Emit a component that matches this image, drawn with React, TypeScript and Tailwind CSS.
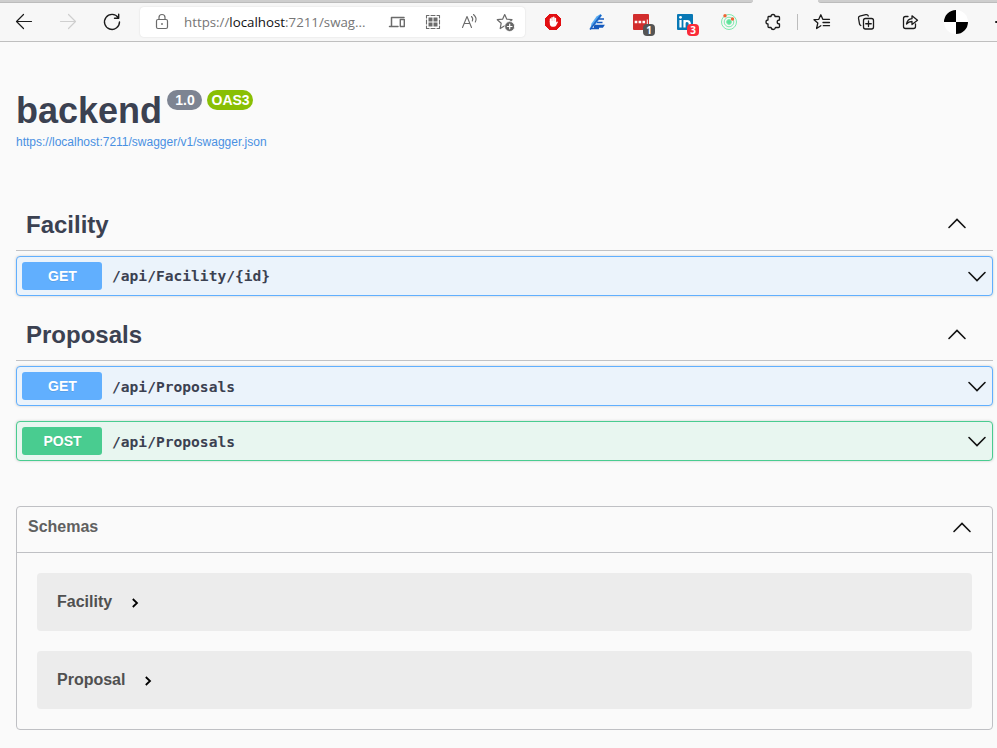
import React from 'react';

type IconProps = { children: React.ReactNode; size?: number; className?: string };

function Icon({ children, size = 20, className = '' }: IconProps) {
  return (
    <svg
      width={size}
      height={size}
      viewBox="0 0 20 20"
      fill="none"
      stroke="currentColor"
      strokeWidth="1.2"
      strokeLinecap="round"
      strokeLinejoin="round"
      className={className}
    >
      {children}
    </svg>
  );
}

function Cell({ children, className = 'w-11' }: { children: React.ReactNode; className?: string }) {
  return <div className={`flex h-full shrink-0 items-center justify-center ${className}`}>{children}</div>;
}

const starPath = 'M9.700 2.500 L11.800 7.200 L17 7.700 L13.200 11.200 L14.200 16.500 L9.700 13.700 L5.200 16.500 L6.200 11.200 L2.300 7.700 L7.600 7.200Z';

function AddressBar() {
  return (
    <div className="ml-1.5 flex h-[30px] w-[385px] shrink-0 items-center rounded bg-white text-[#6b6b6b] shadow-[0_0_2px_rgba(0,0,0,0.12)]">
      <Cell>
        <Icon>
          <rect x="4.500" y="7.500" width="11" height="9" rx="1.500" />
          <path d="M7 7.500V5.500a3 3 0 0 1 6 0V7.500" />
          <circle cx="10" cy="12" r="0.900" fill="currentColor" stroke="none" />
        </Icon>
      </Cell>
      <div className="w-[195px] whitespace-nowrap font-['Open_Sans','Noto_Sans',sans-serif] text-[13.3px] leading-5 text-[#767676]">
        https://<span className="text-[#111]">localhost</span>:7211/swag...
      </div>
      <Cell className="w-9">
        <Icon>
          <path d="M4.500 13.500V5.500H17M2.500 14.500H11" strokeWidth="1.5" />
          <rect x="13.300" y="7.500" width="4" height="7" strokeWidth="1.4" />
        </Icon>
      </Cell>
      <Cell className="w-9">
        <Icon>
          <path d="M3.500 6V3.500H6M8 3.500h4M14 3.500h2.500V6M16.500 8v4M16.500 14v2.500H14M12 16.500H8M6 16.500H3.500V14M3.500 12V8" strokeWidth="1.1" />
          <path d="M5.500 5.500h4v4h-4zM10.500 5.500h4v4h-4zM5.500 10.500h4v4h-4zM10.500 10.500h4v4h-4z" fill="currentColor" stroke="none" />
        </Icon>
      </Cell>
      <Cell className="w-9">
        <Icon>
          <path d="M3.500 15.500L8 4.500L12.500 15.500M5 11.500H11M12.500 4.500Q14.500 6.500 13.300 9M14.500 2.500Q18.500 6 16.300 10" strokeWidth="1.1" />
        </Icon>
      </Cell>
      <Cell className="w-9">
        <Icon>
          <path d={starPath} />
          <circle cx="14.700" cy="14.500" r="5" fill="#666" stroke="#fff" strokeWidth="0.8" />
          <path d="M14.700 12.200v4.600M12.400 14.500h4.600" stroke="#fff" />
        </Icon>
      </Cell>
    </div>
  );
}

function CountBadge({ value, className }: { value: string; className: string }) {
  return (
    <span
      className={`absolute -right-1.5 top-[10px] flex h-3 w-3 items-center justify-center rounded-sm font-['Open_Sans',sans-serif] text-[10px] font-bold leading-none text-white ${className}`}
    >
      {value}
    </span>
  );
}

function Toolbar() {
  return (
    <header className="h-[42px] border-b border-[#bfbfbf] bg-[#f7f7f7] text-[#1b1b1b]">
      <div className="flex h-[3px] justify-between">
        <div className="w-[753px] rounded-br-[3px] border-b border-[#bcbcbc] bg-[#cecece]" />
        <div className="w-[179px] rounded-bl-[3px] border-b border-[#bcbcbc] bg-[#cecece]" />
      </div>
      <div className="flex h-[38px] items-center overflow-hidden pl-0.5">
        <Cell>
          <Icon><path d="M17.500 9.500H2.500M9.500 2.500L2.500 9.500L9.500 16.500" /></Icon>
        </Cell>
        <Cell className="w-11 text-[#cfcfcf]">
          <Icon><path d="M2.500 9.500H17.500M10.500 2.500L17.500 9.500L10.500 16.500" /></Icon>
        </Cell>
        <Cell>
          <Icon><path d="M16.200 5.700A7.500 7.500 0 1 0 17.500 10M16.700 2.300V6.300H12.500" strokeWidth="1.4" /></Icon>
        </Cell>
        <AddressBar />
        <Cell className="ml-1.5 w-11">
          <svg width="16" height="16" viewBox="0 0 16 16">
            <path d="M5 0h6l5 5v6l-5 5H5l-5-5V5z" fill="#e20f12" stroke="#e20f12" strokeLinejoin="round" />
            <path d="M5.500 8V5M7.100 8V3.700M8.800 8V3.300M10.400 8V4.500" stroke="#fff" strokeWidth="1.500" strokeLinecap="round" />
            <path d="M4.800 7h6.300v1.500l1.100-1 .8.600-2 3.600Q10.300 12.800 8.800 12.800H7.400Q4.800 12.300 4.800 9.500z" fill="#fff" />
          </svg>
        </Cell>
        <Cell>
          <svg width="18" height="18" viewBox="0 0 18 18">
            <path d="M8.500 3.500L12.500 1L14 2.500L8 11L2 16.500L3.500 10.500z" fill="#55a9f0" />
            <path d="M13 2L2 16.500" stroke="#1d63c4" strokeWidth="1.500" />
            <path d="M10.500 6H16M9 9.500H14.500M6.500 12.500H15.500L14.500 14H6M3 15.500H11" stroke="#1459bd" strokeWidth="1.500" />
          </svg>
        </Cell>
        <Cell>
          <div className="relative h-4 w-4">
            <svg width="16" height="16">
              <rect width="16" height="16" rx="1" fill="#d22d2d" />
              <path d="M1.700 8h2.600M5.600 8h2.600M9.500 8h2.600" stroke="#fff" strokeWidth="2.300" />
              <path d="M14.300 5.500v5" stroke="#fff" strokeWidth="1" />
            </svg>
            <CountBadge value="1" className="bg-[#555]" />
          </div>
        </Cell>
        <Cell>
          <div className="relative h-4 w-4">
            <svg width="16" height="16"><rect width="16" height="16" rx="1" fill="#0878b5" /><path d="M3.500 6v7.500M7.500 6v7.500M7.500 9.500Q7.500 7 10 7T12.800 9.500V13.500" stroke="#fff" strokeWidth="2.200" fill="none" /><circle cx="3.500" cy="3.300" r="1.400" fill="#fff" /></svg>
            <CountBadge value="3" className="bg-[#fa2c3a]" />
          </div>
        </Cell>
        <Cell>
          <svg width="18" height="18" viewBox="0 0 18 18" fill="none" stroke="#7deaad">
            <circle cx="9" cy="9" r="7.500" /><circle cx="9" cy="9" r="4.800" /><circle cx="9" cy="9" r="2.400" fill="#5be29a" />
            <circle cx="5" cy="2.800" r="1.700" fill="#ee6534" stroke="none" /><circle cx="12.500" cy="6" r="1.700" fill="#ee6534" stroke="none" />
          </svg>
        </Cell>
        <Cell>
          <Icon>
            <path d="M5.500 4.500H8Q8 2.500 10 2.500T12 4.500H15.500Q16.500 4.500 16.500 5.500V8Q14.200 8 14.200 10T16.500 12V14.500Q16.500 15.500 15.500 15.500H12.500Q12 17.500 10.200 17.500T8 15.500H6Q5 15.500 5 14.500V12Q3 12 3 10T5 8V5.500Q5 4.500 5.500 4.500Z" strokeWidth="1.300" />
          </Icon>
        </Cell>
        <div className="ml-0.5 mr-[2px] h-4 w-px shrink-0 bg-[#bdbdbd]" />
        <Cell>
          <Icon><path d="M10.800 7.300L8.800 2.800L6.800 7.300L2 7.700L5.800 11L4.600 16.500L8.800 13.700M10.800 7.300H17.500M11 10.500H17.500M11.300 13.700H17.500" strokeWidth="1.300" /></Icon>
        </Cell>
        <Cell>
          <Icon>
            <rect x="7.500" y="6.500" width="10" height="10.500" rx="2" strokeWidth="1.300" />
            <path d="M12.500 9v5.500M9.750 11.750H15.250M4.800 13.500Q3.800 13 3.500 12L2.500 6.200Q2.300 4.700 3.800 4.200L9.800 2.700Q11.800 2.300 12.300 4" strokeWidth="1.300" />
          </Icon>
        </Cell>
        <Cell>
          <Icon><path d="M8 4.500H5.500Q3.500 4.500 3.500 6.500V14.500Q3.500 16.500 5.500 16.500H13.500Q15.500 16.500 15.500 14.500V12M6.500 12Q7.500 7 12 6.700V3.800L17.500 8.300L12 12.500V9.500Q8.500 9.500 6.500 12Z" strokeWidth="1.300" /></Icon>
        </Cell>
        <svg width="24" height="24" viewBox="0 0 24 24" className="ml-3 shrink-0">
          <circle cx="12" cy="12" r="12" fill="#fff" />
          <path d="M12 12V0A12 12 0 0 0 0 12ZM12 12V24A12 12 0 0 0 24 12Z" fill="#000" />
        </svg>
        <div className="ml-[27px] h-0.5 w-[3px] shrink-0 rounded-l-full bg-[#1b1b1b]" />
      </div>
    </header>
  );
}

function Chevron({ up = false, className = '' }: { up?: boolean; className?: string }) {
  return (
    <svg width="20" height="20" viewBox="0 0 20 20" fill="none" stroke="#111" strokeWidth="1.6" strokeLinecap="round" className={`shrink-0 ${className}`}>
      <path d={up ? 'M2 13.500L10 5.500L18 13.500' : 'M2 6.500L10 14.500L18 6.500'} />
    </svg>
  );
}

function TagHeading({ name, chevronClass = '' }: { name: string; chevronClass?: string }) {
  return (
    <div className="flex h-[51px] items-center border-b border-[#c1c2c5] pl-2.5 pr-[26px]">
      <h2 className="flex-1 text-2xl font-bold leading-7">{name}</h2>
      <Chevron up className={chevronClass} />
    </div>
  );
}

function Operation({ method, path, offset = '' }: { method: 'GET' | 'POST'; path: string; offset?: string }) {
  const get = method === 'GET';
  return (
    <div className={`flex h-10 items-center rounded border px-[5px] shadow-[0_0_3px_rgba(0,0,0,0.19)] ${get ? 'border-[#61affe] bg-[#ebf3fb]' : 'border-[#49cc90] bg-[#e8f6f0]'}`}>
      <div className={`flex h-7 w-20 items-center justify-center rounded-[3px] pl-px text-sm font-bold text-white [text-shadow:0_1px_0_rgba(0,0,0,0.1)] ${get ? 'bg-[#61affe]' : 'bg-[#49cc90]'}`}>
        {method}
      </div>
      <div className={`flex-1 pl-2.5 font-['DejaVu_Sans_Mono',monospace] text-[14.6px] font-bold leading-5 ${offset}`}>{path}</div>
      <Chevron />
    </div>
  );
}

function Model({ name }: { name: string }) {
  return (
    <div className="flex h-[58px] items-center rounded bg-[#ececec] pl-5 text-base font-bold text-[#505050]">
      <span className="leading-5">{name}</span>
      <svg width="10" height="12" viewBox="0 0 10 12" fill="none" stroke="#000" strokeWidth="1.800" className="ml-[18px] mt-0.5">
        <path d="M2.800 2L7 6L2.800 10" />
      </svg>
    </div>
  );
}

export default function App() {
  return (
    <div className="h-[748px] w-[997px] overflow-hidden bg-[#fafafa] font-['Liberation_Sans',Arial,sans-serif] text-[#3b4151]">
      <Toolbar />
      <main className="pl-4 pr-1">
        <section className="h-[157px] pt-12">
          <div className="flex items-start">
            <h1 className="text-[36px] font-bold leading-[42px]">backend</h1>
            <span className="ml-[5px] flex h-5 w-[35px] items-center justify-center rounded-full bg-[#7d8492] pl-px text-sm font-bold text-white">1.0</span>
            <span className="ml-[5px] flex h-5 w-[46px] items-center justify-center rounded-full bg-[#89bf04] pl-px text-sm font-bold text-white">OAS3</span>
          </div>
          <a className="block text-xs leading-5 text-[#4990e2]">https://localhost:7211/swagger/v1/swagger.json</a>
        </section>
        <section className="pt-[1px]">
          <TagHeading name="Facility" chevronClass="mb-0.5" />
          <div className="pt-[5px]">
            <Operation method="GET" path="/api/Facility/{id}" />
          </div>
        </section>
        <section className="pt-[14px]">
          <TagHeading name="Proposals" />
          <div className="flex flex-col gap-[15px] pt-[5px]">
            <Operation method="GET" path="/api/Proposals" offset="pt-0.5" />
            <Operation method="POST" path="/api/Proposals" offset="pt-0.5" />
          </div>
        </section>
        <section className="mt-[45px] h-[224px] rounded border border-[#bfc0c4]">
          <div className="flex h-[46px] items-center border-b border-[#bfc0c4] pl-[11px] pr-5">
            <h3 className="flex-1 pb-1.5 text-base font-bold leading-5 text-[#606060]">Schemas</h3>
            <Chevron up className="mb-[3px]" />
          </div>
          <div className="flex flex-col gap-5 p-5">
            <Model name="Facility" />
            <Model name="Proposal" />
          </div>
        </section>
      </main>
    </div>
  );
}
